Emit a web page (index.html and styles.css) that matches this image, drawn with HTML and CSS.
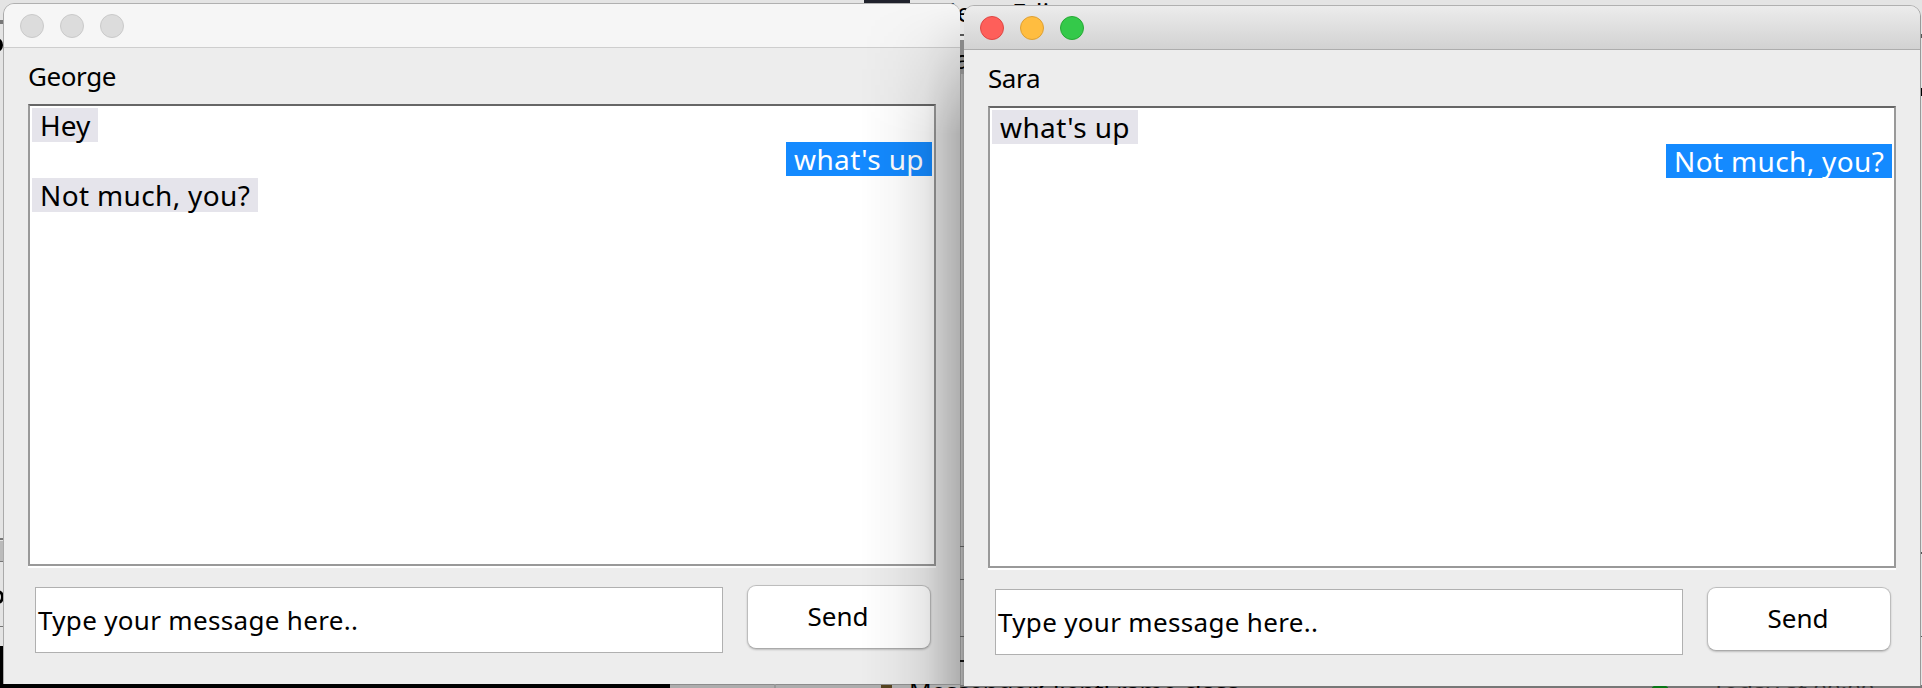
FILE: index.html
```
<!DOCTYPE html>
<html lang="en">
<head>
<meta charset="utf-8">
<title>Messenger</title>
<link rel="stylesheet" href="styles.css">
</head>
<body>
<div class="desktop">
  <div class="backdrop">
    <i class="bg dark-tab"></i>
    <span class="bg menu menu-file">File</span><span class="bg menu menu-edit">Edit</span>
    <i class="bg left-strip"></i><i class="bg left-line l1"></i><i class="bg left-line l2"></i><i class="bg left-line l3"></i><i class="bg left-line l4"></i>
    <i class="bg arc arc-top"></i><i class="bg arc arc-bottom"></i>
    <i class="bg gap"></i><i class="bg gap-bar"></i><i class="bg gap-line g1"></i><i class="bg gap-line g2"></i><i class="bg gap-line g3"></i><i class="bg gap-line g4"></i><i class="bg gap-line g5"></i>
    <span class="bg side-a">a</span>
    <i class="bg terminal"></i><i class="bg floor"></i><i class="bg floor-dark"></i>
    <i class="bg divider"></i><i class="bg file-icon"></i>
    <span class="bg file-name">MessengerClientFrame.class</span>
    <i class="bg green-dot"></i><span class="bg file-date">Today at 00:00</span>
    <i class="bg right-line r1"></i><i class="bg right-line r2"></i><i class="bg right-line r3"></i><i class="bg right-line r4"></i>
  </div>

  <section class="window inactive">
    <header class="titlebar"><i class="light"></i><i class="light"></i><i class="light"></i></header>
    <div class="content">
      <div class="name">George</div>
      <div class="chat">
        <div class="msg in hey">Hey</div>
        <div class="msg out up">what's up</div>
        <div class="msg in much third">Not much, you?</div>
      </div>
      <div class="compose">
        <div class="field">Type your message here..</div>
        <button class="send">Send</button>
      </div>
    </div>
    <div class="shade"></div>
  </section>

  <section class="window active">
    <header class="titlebar"><i class="light red"></i><i class="light yellow"></i><i class="light green"></i></header>
    <div class="content">
      <div class="name">Sara</div>
      <div class="chat">
        <div class="msg in up">what's up</div>
        <div class="msg out much">Not much, you?</div>
      </div>
      <div class="compose">
        <div class="field">Type your message here..</div>
        <button class="send">Send</button>
      </div>
    </div>
  </section>
</div>
</body>
</html>
```
FILE: styles.css
```
* { box-sizing: border-box; }
html, body { height: 688px; overflow: hidden; }
body { margin: 0; font-family: "Noto Sans", "Open Sans", sans-serif; color: #000; }
.desktop { position: relative; width: 1922px; height: 688px; overflow: hidden; background: #e4e4e4; }
.backdrop { position: absolute; inset: 0; overflow: hidden; }
.bg { position: absolute; display: block; font-style: normal; white-space: nowrap; }

/* windows */
.window { position: absolute; width: 956px; height: 680px; background: #ededed; border-radius: 10px 10px 0 0; }
.inactive { left: 4px; top: 4px; box-shadow: 0 -1px 0 #b0b0b0, -1px 0 0 #aaa; }
.active { left: 964px; top: 6px; box-shadow: 0 -1px 0 #b0b0b0, 1px 0 0 #999; }
.titlebar { height: 44px; display: flex; gap: 16px; padding: 10px 16px; border-radius: 10px 10px 0 0; background: #f6f6f6; border-bottom: 1px solid #cecece; }
.active .titlebar { background: linear-gradient(#ececec, #d2d2d2); border-bottom-color: #adadad; }
.light { width: 24px; height: 24px; border-radius: 50%; background: #dcdcdc; border: 1px solid #cacaca; }
.red { background: #fe5f5a; border-color: #df4744; }
.yellow { background: #ffbd40; border-color: #dea034; }
.green { background: #34c94a; border-color: #26a934; }
.content { padding: 10px 24px 0; }
.name { height: 46px; font-size: 26px; line-height: 36px; letter-spacing: -.4px; }
.chat { height: 462px; width: 908px; border: 2px solid #999; border-top-color: #666; background: #fff; box-shadow: 0 2px #fff; padding: 2px; display: flex; flex-direction: column; align-items: flex-start; }
.msg { height: 34px; line-height: 34px; font-size: 28px; padding-left: 8px; white-space: nowrap; flex: none; }
.in { background: #e5e4eb; }
.out { background: #148aff; color: #fff; align-self: flex-end; }
.hey { width: 66px; }
.up { width: 146px; letter-spacing: .4px; }
.much { width: 226px; letter-spacing: .35px; }
.third { margin-top: 2px; }
.compose { display: flex; gap: 24px; padding: 19px 0 0 7px; }
.field { width: 688px; height: 66px; margin-top: 2px; border: 1px solid #b0b0b0; background: #fff; font-size: 26px; line-height: 64px; padding-left: 2px; letter-spacing: .32px; white-space: nowrap; }
.send { width: 184px; height: 64px; border: 1px solid #bdbdbd; border-bottom-color: #aaa; border-radius: 9px; background: #fff; box-shadow: 0 1px 2px rgba(0,0,0,.2); font: 26px "Noto Sans", sans-serif; padding: 0 2px 3px 0; color: #000; }
.shade { position: absolute; top: 0; right: 0; bottom: 0; width: 100px; background: linear-gradient(90deg, transparent, rgba(0,0,0,.03) 35%, rgba(0,0,0,.09) 65%, rgba(0,0,0,.26)); -webkit-mask-image: linear-gradient(transparent, #000 130px); mask-image: linear-gradient(transparent, #000 130px); }

/* slivers of the windows behind */
.dark-tab { left: 864px; top: 0; width: 46px; height: 4px; background: #20222c; }
.menu { top: -3px; font-size: 26px; line-height: 30px; }
.menu-file { left: 927px; letter-spacing: 1px; }
.menu-edit { left: 1012px; }
.side-a { left: 955px; top: 41px; font-size: 26px; line-height: 36px; }
.arc { left: -9px; width: 12px; height: 14px; border: 3px solid #000; border-radius: 50%; }
.arc-top { top: 38px; }
.arc-bottom { top: 590px; left: -8px; }
.left-strip { left: 0; top: 541px; width: 4px; height: 20px; background: #bbb; }
.left-line { left: 0; width: 4px; height: 2px; background: #777; }
.l1 { top: 20px; height: 4px; }
.l2 { top: 538px; }
.l3 { top: 561px; height: 1px; }
.l4 { top: 626px; height: 1px; }
.gap { left: 960px; top: 74px; width: 4px; height: 614px; background: linear-gradient(90deg, #888 1px, #aaa 1px, #909090); }
.gap-bar { left: 960px; top: 40px; width: 4px; height: 34px; background: #888; }
.gap-line { left: 960px; width: 4px; height: 1px; background: #555; }
.g1 { top: 34px; height: 2px; }
.g2 { top: 546px; }
.g3 { top: 579px; }
.g4 { top: 636px; }
.g5 { top: 660px; height: 2px; background: #111; }
.terminal { left: 0; top: 646px; width: 670px; height: 42px; background: #000; }
.floor { left: 670px; top: 684px; width: 290px; height: 4px; background: #adadad; border-top: 1px solid #8c8c8c; }
.floor-dark { left: 960px; top: 685px; width: 962px; height: 3px; background: #777; }
.divider { left: 774px; top: 684px; width: 2px; height: 4px; background: #999; }
.file-icon { left: 881px; top: 685px; width: 11px; height: 3px; background: #54431f; }
.file-name { left: 909px; top: 676px; font-size: 25px; line-height: 30px; letter-spacing: -.2px; }
.green-dot { left: 1651px; top: 685px; width: 18px; height: 12px; border-radius: 6px 6px 0 0; background: #087816; }
.file-date { left: 1712px; top: 676px; font-size: 24px; line-height: 30px; color: #333; }
.right-line { left: 1920px; width: 2px; height: 1px; background: #555; }
.r1 { top: 34px; height: 4px; }
.r2 { top: 88px; height: 8px; background: #000; }
.r3 { top: 552px; height: 2px; }
.r4 { top: 636px; }
```
